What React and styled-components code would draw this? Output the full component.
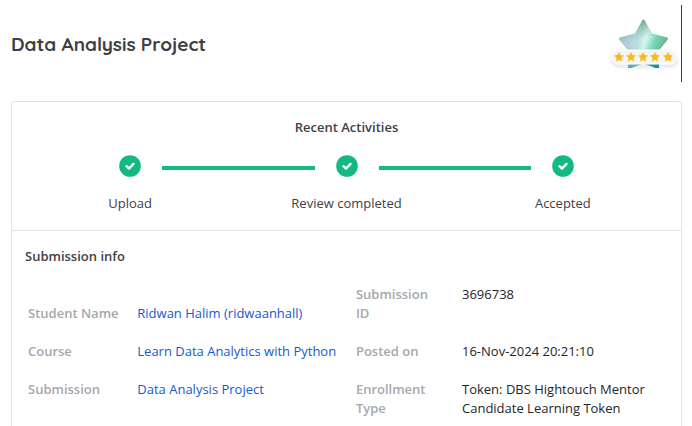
import React from "react";
import styled, { createGlobalStyle } from "styled-components";

const GlobalStyle = createGlobalStyle`
  * { box-sizing: border-box; }
  body {
    margin: 0;
    background: #fff;
    color: #3f4045;
    font: 13px/19px "Open Sans", "Noto Sans", sans-serif;
  }
`;

const Page = styled.main`
  padding: 5px 10px 0 11px;
`;

const Header = styled.header`
  display: flex;
  align-items: center;
  justify-content: space-between;
  height: 77px;
  padding-right: 2px;
  border-right: 1px solid #3a3a3f;
  margin-bottom: 19px;
`;

const Title = styled.h1`
  margin: 0;
  font: 700 19px/28px Quicksand, Lato, sans-serif;
`;

const Badge = styled.svg`
  display: block;
  width: 70px;
  height: 60px;
`;

const Card = styled.section`
  border: 1px solid #e2e3e5;
  border-radius: 3px 3px 0 0;
`;

const Activities = styled.section`
  padding: 16px 10px 17px;
  border-bottom: 1px solid #e2e3e5;
`;

const Heading = styled.h2`
  margin: 0;
  font-size: 13px;
  font-weight: 600;
  line-height: 19px;
  text-align: ${(p) => p.$align || "left"};
`;

const Steps = styled.ol`
  display: grid;
  grid-template-columns: repeat(3, 1fr);
  list-style: none;
  margin: 18px 0 0;
  padding: 0;
`;

const Step = styled.li`
  text-align: center;
`;

const Track = styled.div`
  display: flex;
  gap: 21px;
  margin-bottom: 17px;
`;

const Line = styled.span`
  flex: 1;
  height: 4px;
  margin-top: 11px;
  background: ${(p) => (p.$hidden ? "transparent" : "#12b981")};
`;

const CheckIcon = styled.svg`
  width: 22px;
  height: 22px;
`;

const Info = styled.section`
  padding: 16px 13px 0;
`;

const Table = styled.table`
  width: 100%;
  margin-top: 9px;
  border-collapse: collapse;
  table-layout: fixed;
`;

const Col = styled.col`
  width: ${(p) => p.$width};
`;

const Label = styled.th`
  padding: 10px 24px 9px 3px;
  color: #a6a7ad;
  font-weight: 600;
  text-align: left;
  vertical-align: ${(p) => p.$valign || "top"};
  white-space: ${(p) => (p.$nowrap ? "nowrap" : "normal")};
`;

const Value = styled.td`
  padding: 10px 3px 9px;
  color: #24252a;
  vertical-align: ${(p) => p.$valign || "top"};
`;

const Link = styled.a`
  color: #1858cf;
  text-decoration: none;
`;

const starX = [10, 22, 34, 46, 59];

function RatingBadge() {
  return (
    <Badge viewBox="0 0 70 60" role="img" aria-label="Five star rating">
      <defs>
        <linearGradient id="base" x1="0" y1="0.2" x2="1" y2="0.5">
          <stop offset="0" stopColor="#9dbfc0" />
          <stop offset="0.2" stopColor="#b4cbdc" />
          <stop offset="0.43" stopColor="#bcdfe0" />
          <stop offset="0.56" stopColor="#dcf7ef" />
          <stop offset="0.74" stopColor="#74d8b6" />
          <stop offset="1" stopColor="#72a888" />
        </linearGradient>
        <linearGradient id="shade" x1="0.4" y1="0" x2="0.6" y2="1">
          <stop offset="0" stopColor="#6c9c82" stopOpacity="0.9" />
          <stop offset="0.4" stopColor="#7cbf9f" stopOpacity="0" />
          <stop offset="0.7" stopColor="#41b5b0" stopOpacity="0.1" />
          <stop offset="1" stopColor="#078ba0" stopOpacity="0.85" />
        </linearGradient>
        <filter id="shadow" x="-10%" y="-50%" width="120%" height="240%">
          <feDropShadow dx="0" dy="2" stdDeviation="2" floodColor="#222" floodOpacity="0.16" />
        </filter>
        <path
          id="goldStar"
          d="M0-5 1.6-1.9 5-1.4 2.5 1.1 3.1 4.6 0 3-3.1 4.6-2.5 1.1-5-1.4-1.6-1.9Z"
        />
        <path
          id="bigStar"
          d="M33.500 6Q34.500 5 35.500 6L43 19.500 58.500 23.500Q59.500 24 58.500 26L49.500 37 50 54 47 54 34.500 49.500 22 54 19 54 19.500 37 10.500 26Q9.500 24 10.500 23.500L26 19.500Z"
        />
      </defs>
      <use href="#bigStar" fill="url(#base)" />
      <use href="#bigStar" fill="url(#shade)" />
      <rect x="3" y="36" width="65" height="14" rx="7" fill="#f5f5f6" stroke="#fff" filter="url(#shadow)" />
      {starX.map((x) => (
        <use key={x} href="#goldStar" x={x} y="43" fill="#fdba20" />
      ))}
    </Badge>
  );
}

const steps = ["Upload", "Review completed", "Accepted"];

const rows = [
  ["Student Name", "Ridwan Halim (ridwaanhall)", "Submission ID", "3696738"],
  ["Course", "Learn Data Analytics with Python", "Posted on", "16-Nov-2024 20:21:10"],
  [
    "Submission",
    "Data Analysis Project",
    "Enrollment Type",
    "Token: DBS Hightouch Mentor Candidate Learning Token",
  ],
];

export default function App() {
  return (
    <Page>
      <GlobalStyle />
      <Header>
        <Title>Data Analysis Project</Title>
        <RatingBadge />
      </Header>
      <Card>
        <Activities>
          <Heading $align="center">Recent Activities</Heading>
          <Steps>
            {steps.map((name, i) => (
              <Step key={name}>
                <Track>
                  <Line $hidden={i === 0} />
                  <CheckIcon viewBox="0 0 22 22" aria-hidden="true">
                    <circle cx="11" cy="11" r="10.800" fill="#12b981" />
                    <path
                      d="M7.500 11.200 10 13.600 14.500 8.900"
                      fill="none"
                      stroke="#fff"
                      strokeWidth="2.400"
                      strokeLinecap="round"
                      strokeLinejoin="round"
                    />
                  </CheckIcon>
                  <Line $hidden={i === steps.length - 1} />
                </Track>
                {name}
              </Step>
            ))}
          </Steps>
        </Activities>
        <Info>
          <Heading>Submission info</Heading>
          <Table>
            <colgroup>
              <Col $width="17%" />
              <Col $width="34%" />
              <Col $width="16.500%" />
              <Col $width="auto" />
            </colgroup>
            <tbody>
              {rows.map(([label, link, label2, value], i) => {
                const valign = i === 0 ? "bottom" : "top";
                return (
                  <tr key={label}>
                    <Label scope="row" $valign={valign} $nowrap>{label}</Label>
                    <Value $valign={valign}><Link href="#">{link}</Link></Value>
                    <Label scope="row">{label2}</Label>
                    <Value>{value}</Value>
                  </tr>
                );
              })}
            </tbody>
          </Table>
        </Info>
      </Card>
    </Page>
  );
}
